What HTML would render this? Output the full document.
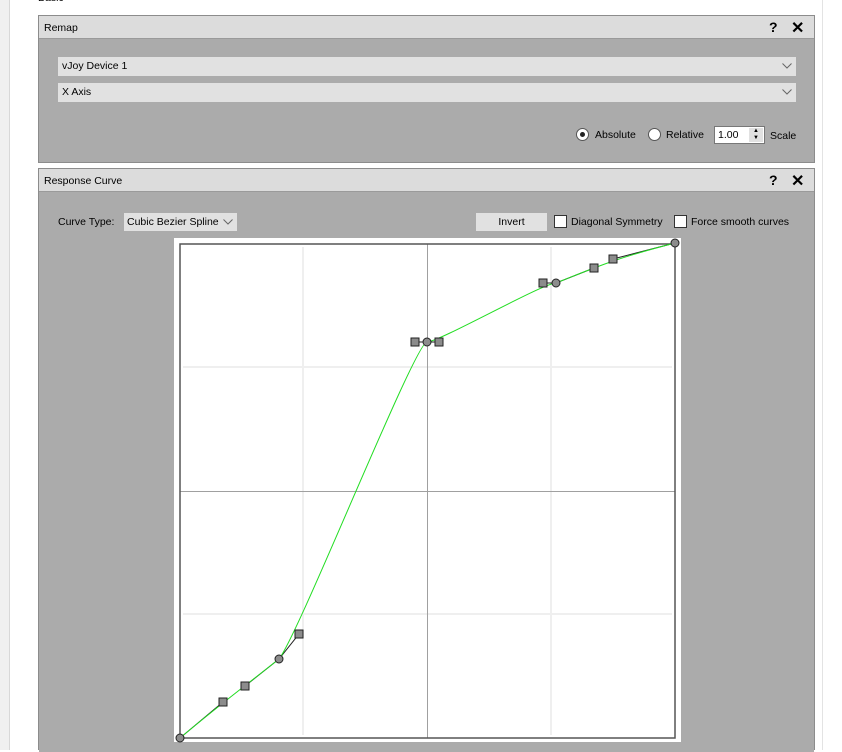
<!DOCTYPE html>
<html><head><style>
*{box-sizing:border-box;margin:0;padding:0}
body{width:842px;height:750px;background:#fff;position:relative;overflow:hidden;font-family:"Liberation Sans",sans-serif;font-size:10.5px;color:#000}
.a{position:absolute}
.hdr{background:#dcdcdc;border-bottom:1px solid #9a9a9a}
.body{background:#ababab}
.combo{background:#e1e1e1;padding-left:4px;line-height:19px}
.chev{position:absolute;right:4px;top:6px}
.ctl{position:absolute;font-weight:bold;font-size:14px}
.cb{position:absolute;width:13px;height:13px;background:#fff;border:1px solid #333}
</style></head><body>
<div class="a" style="left:0;top:0;width:10px;height:750px;background:#f0f0f0;border-right:1px solid #d8d8d8"></div>
<div class="a" style="left:822px;top:0;width:20px;height:750px;background:#fff;border-left:1px solid #e3e3e3"></div>
<div class="a" style="left:38px;top:-8px">Basic</div>

<!-- Remap -->
<div class="a" style="left:38px;top:15px;width:777px;height:148px;border:1px solid #8c8c8c">
 <div class="a hdr" style="left:0;top:0;width:775px;height:23px"><span class="a" style="left:5px;top:6px">Remap</span><span class="ctl" style="left:730px;top:3px">?</span><span class="ctl" style="left:752px;top:2px;font-size:16px">✕</span></div>
 <div class="a body" style="left:0;top:23px;width:775px;height:123px"></div>
 <div class="a combo" style="left:19px;top:41px;width:738px;height:19px">vJoy Device 1<svg class="chev" width="10" height="6"><polyline points="0.5,0.5 5,5 9.5,0.5" fill="none" stroke="#666"/></svg></div>
 <div class="a combo" style="left:19px;top:67px;width:738px;height:19px">X Axis<svg class="chev" width="10" height="6"><polyline points="0.5,0.5 5,5 9.5,0.5" fill="none" stroke="#666"/></svg></div>
 <div class="a" style="left:537px;top:112px;width:13px;height:13px;border-radius:50%;background:#fff;border:1px solid #555"><div class="a" style="left:3px;top:3px;width:5px;height:5px;border-radius:50%;background:#222"></div></div>
 <span class="a" style="left:556px;top:113px">Absolute</span>
 <div class="a" style="left:609px;top:112px;width:13px;height:13px;border-radius:50%;background:#fff;border:1px solid #555"></div>
 <span class="a" style="left:627px;top:113px">Relative</span>
 <div class="a" style="left:675px;top:110px;width:51px;height:18px;background:#fff;border:1px solid #777;padding-left:3px;line-height:16px">1.00<div class="a" style="left:34px;top:1px;width:14px;height:14px;background:#e1e1e1;font-size:6px;line-height:7px;text-align:center">▲<br>▼</div></div>
 <span class="a" style="left:731px;top:114px">Scale</span>
</div>

<!-- Response Curve -->
<div class="a" style="left:38px;top:168px;width:777px;height:582px;border:1px solid #8c8c8c;border-bottom:none">
 <div class="a hdr" style="left:0;top:0;width:775px;height:23px"><span class="a" style="left:5px;top:6px">Response Curve</span><span class="ctl" style="left:730px;top:3px">?</span><span class="ctl" style="left:752px;top:2px;font-size:16px">✕</span></div>
 <div class="a body" style="left:0;top:23px;width:775px;height:560px"></div>
 <span class="a" style="left:19px;top:47px">Curve Type:</span>
 <div class="a combo" style="left:85px;top:44px;width:113px;height:18px;padding-left:3px;line-height:18px">Cubic Bezier Spline<svg class="chev" width="10" height="6"><polyline points="0.5,0.5 5,5 9.5,0.5" fill="none" stroke="#666"/></svg></div>
 <div class="a" style="left:437px;top:44px;width:71px;height:18px;background:#e1e1e1;text-align:center;line-height:18px">Invert</div>
 <div class="cb" style="left:515px;top:46px"></div><span class="a" style="left:532px;top:47px">Diagonal Symmetry</span>
 <div class="cb" style="left:635px;top:46px"></div><span class="a" style="left:652px;top:47px">Force smooth curves</span>
</div>

<svg class="a" style="left:0;top:0" width="842" height="750">
 <rect x="174" y="238" width="507" height="504" fill="#fff"/>
 <g stroke="#efefef" stroke-width="2">
  <line x1="303" y1="247" x2="303" y2="735"/><line x1="551" y1="247" x2="551" y2="735"/>
  <line x1="183" y1="367" x2="672" y2="367"/><line x1="183" y1="614" x2="672" y2="614"/>
 </g>
 <g stroke="#a0a0a0" stroke-width="1">
  <line x1="427.5" y1="244" x2="427.5" y2="738"/><line x1="180" y1="491.5" x2="675" y2="491.5"/>
 </g>
 <rect x="180" y="244" width="495" height="494" fill="none" stroke="#555" stroke-width="1.5"/>
 <g stroke="#222" stroke-width="1" fill="none">
  <path d="M180 738L223 702M245 686L279 659L299 634M415 342L439 342M543 283L556 283L594 268M613 259L675 243"/>
 </g>
 <path d="M180 738C223 702 245 686 279 659C299 634 415 342 427 342C439 342 543 283 556 283C594 268 613 259 675 243" fill="none" stroke="#22dd22" stroke-width="1"/>
 <g fill="#8c8c8c" stroke="#222" stroke-width="1">
  <rect x="219" y="698" width="8" height="8"/><rect x="241" y="682" width="8" height="8"/><rect x="295" y="630" width="8" height="8"/>
  <rect x="411" y="338" width="8" height="8"/><rect x="435" y="338" width="8" height="8"/><rect x="539" y="279" width="8" height="8"/>
  <rect x="590" y="264" width="8" height="8"/><rect x="609" y="255" width="8" height="8"/>
  <circle cx="180" cy="738" r="4"/><circle cx="279" cy="659" r="4"/><circle cx="427" cy="342" r="4"/><circle cx="556" cy="283" r="4"/><circle cx="675" cy="243" r="4"/>
 </g>
</svg>
</body></html>
